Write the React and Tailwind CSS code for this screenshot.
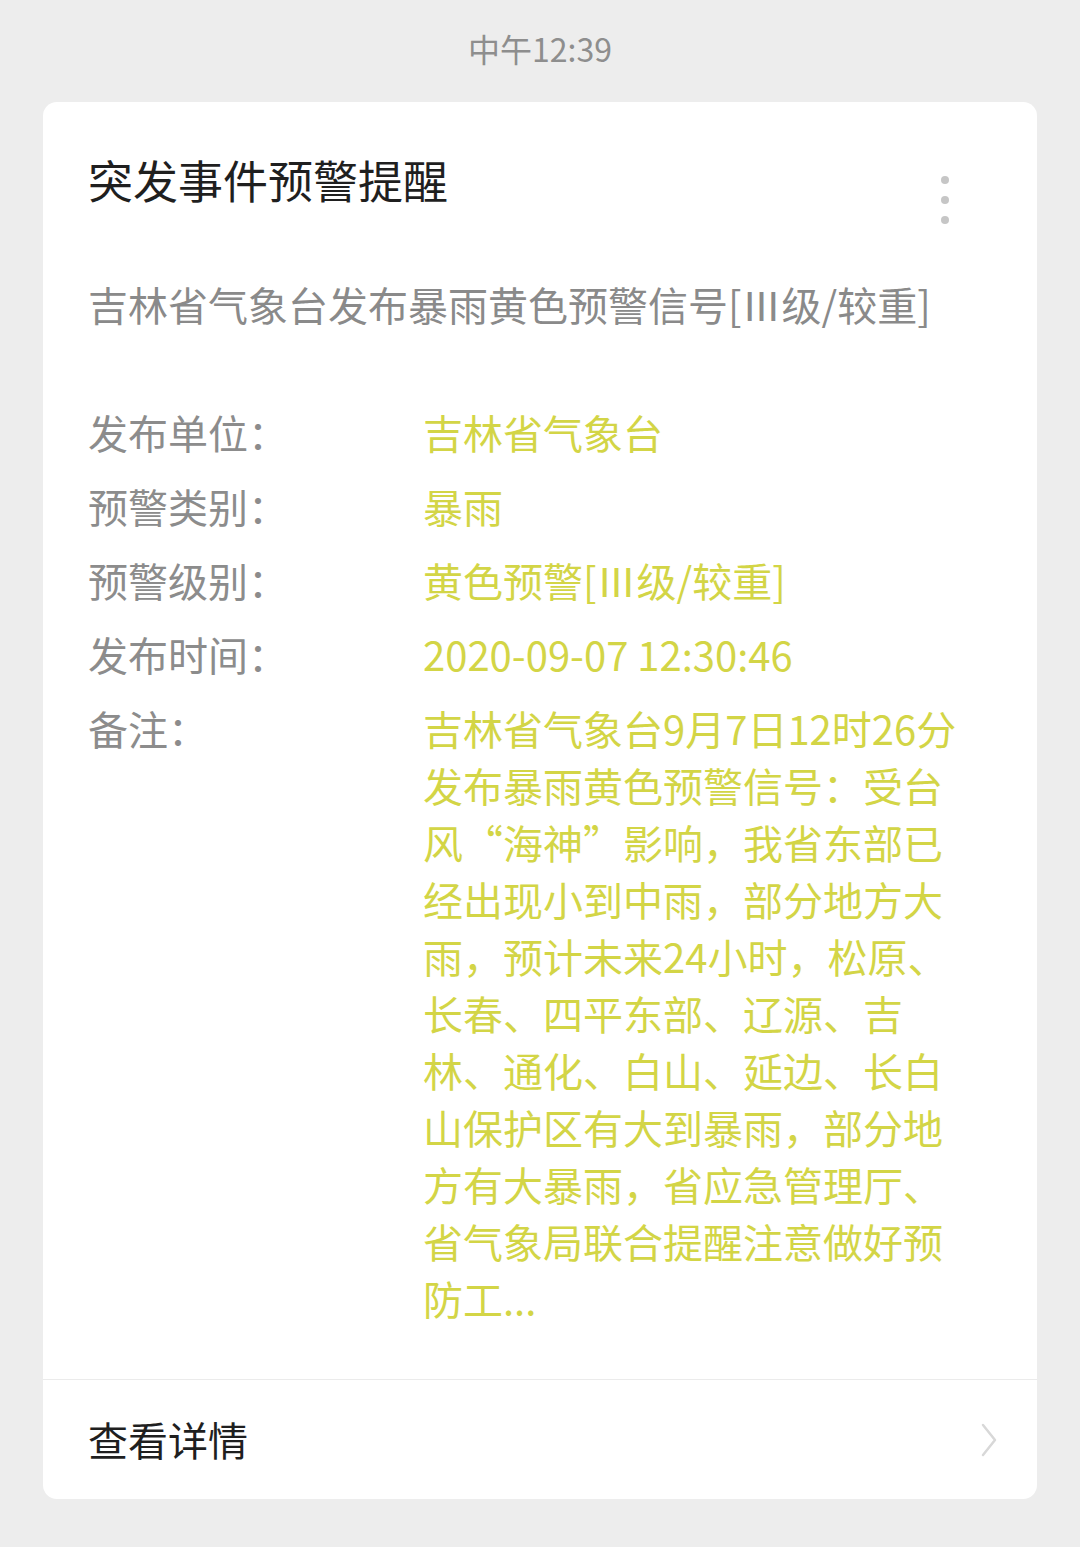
import React from "react";

const font = { fontFamily: '"Noto Sans CJK SC", "Noto Sans", sans-serif' };

const rows = [
    { label: "发布单位：", value: ["吉林省气象台"] },
    { label: "预警类别：", value: ["暴雨"] },
    { label: "预警级别：", value: ["黄色预警[Ⅲ级/较重]"] },
    { label: "发布时间：", value: ["2020-09-07 12:30:46"] },
    {
        label: "备注：",
        value: [
            "吉林省气象台9月7日12时26分",
            "发布暴雨黄色预警信号：受台",
            "风“海神”影响，我省东部已",
            "经出现小到中雨，部分地方大",
            "雨，预计未来24小时，松原、",
            "长春、四平东部、辽源、吉",
            "林、通化、白山、延边、长白",
            "山保护区有大到暴雨，部分地",
            "方有大暴雨，省应急管理厅、",
            "省气象局联合提醒注意做好预",
            "防工...",
        ],
    },
];

function App() {
    return (
        <div className="min-h-[1547px] w-[1080px] bg-[#ededed] pb-[47px] [text-spacing-trim:space-all]" style={font}>
            {/* status time */}
            <div className="flex h-[102px] justify-center pt-[26px] text-[32px] leading-[44px] text-[#8e8e8e]">
                中午12:39
            </div>

            {/* card */}
            <div className="mx-[43px] overflow-hidden rounded-[14px] bg-white">
                <div className="relative px-[45px] pt-[50px] pb-[52px]">
                    <h1 className="text-[45px] font-normal leading-[56px] text-[#1f1f1f]">
                        突发事件预警提醒
                    </h1>

                    {/* more menu */}
                    <div className="absolute right-[88px] top-[74px] flex flex-col gap-[12px]">
                        <span className="h-[8px] w-[8px] rounded-full bg-[#c6c6c6]" />
                        <span className="h-[8px] w-[8px] rounded-full bg-[#c6c6c6]" />
                        <span className="h-[8px] w-[8px] rounded-full bg-[#c6c6c6]" />
                    </div>

                    <p className="mt-[68px] whitespace-nowrap text-[40px] leading-[57px] text-[#8a8a8a]">
                        吉林省气象台发布暴雨黄色预警信号[Ⅲ级/较重]
                    </p>

                    <div className="mt-[71px] flex flex-col gap-[17px] text-[40px] leading-[57px]">
                        {rows.map((row) => (
                            <div key={row.label} className="flex">
                                <div className="w-[335px] shrink-0 text-[#8c8c8c]">{row.label}</div>
                                <div className="whitespace-nowrap text-[#d3d546]">
                                    {row.value.map((line) => (
                                        <div key={line}>{line}</div>
                                    ))}
                                </div>
                            </div>
                        ))}
                    </div>
                </div>

                {/* footer link */}
                <div className="flex h-[120px] items-center justify-between border-t border-[#ebebeb] pl-[45px] pr-[40px]">
                    <span className="text-[40px] leading-[57px] text-[#1f1f1f]">查看详情</span>
                    <svg width="16" height="34" viewBox="0 0 16 34" fill="none">
                        <path d="M2 2 L14 17 L2 32" stroke="#d8d8d8" strokeWidth="2.5" strokeLinecap="round" strokeLinejoin="round" />
                    </svg>
                </div>
            </div>
        </div>
    );
}

export default App;
